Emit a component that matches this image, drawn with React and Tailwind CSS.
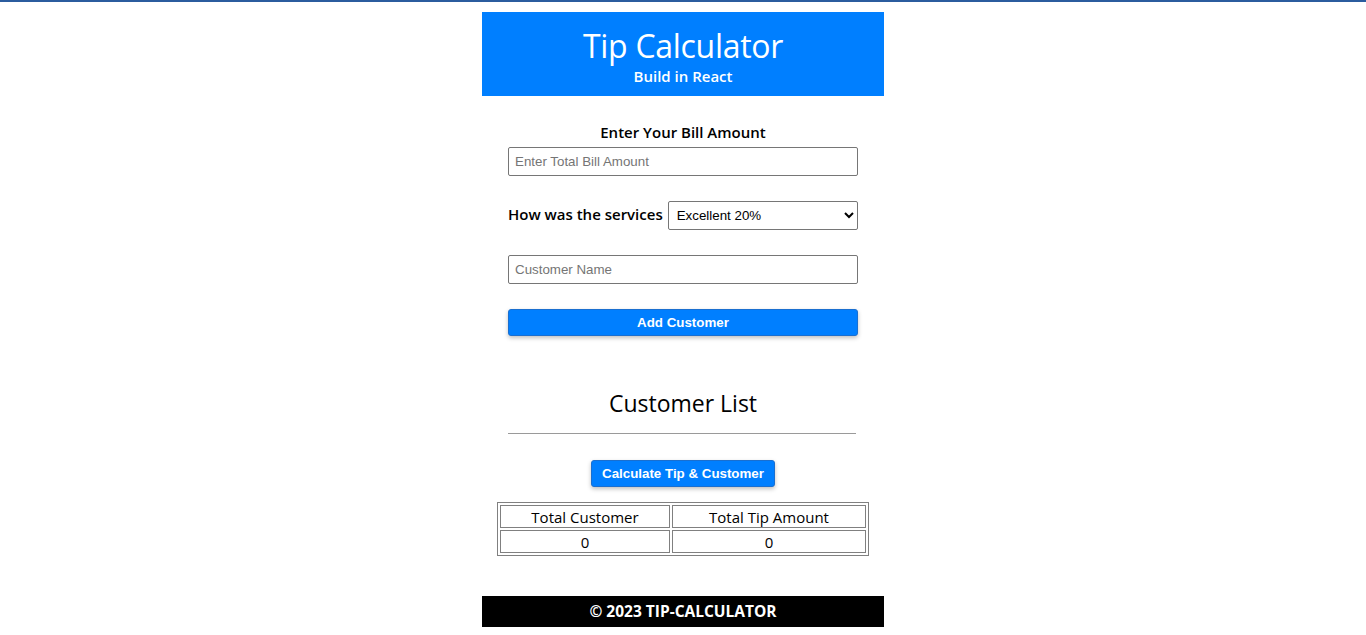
export default function App() {
  const font = { fontFamily: '"Open Sans", "Noto Sans", sans-serif' };
  return (
    <div className="min-h-[635px] bg-white border-t-2 border-[#2b5c9e]" style={font}>
      <div className="mx-auto w-[402px] pt-[10px] flex flex-col">
        <header className="h-[84px] bg-[#007fff] text-white flex flex-col items-center pt-[17px]">
          <h1 className="text-[32px] leading-[34px] font-medium tracking-[-0.3px]">Tip Calculator</h1>
          <p className="text-[15px] leading-[20px] font-semibold mt-[3px]">Build in React</p>
        </header>

        <div className="px-[26px] flex flex-col">
          <div className="pt-[25px] h-[47px] text-center text-[15px] leading-[22px] font-semibold text-black">
            Enter Your Bill Amount
          </div>
          <input
            className="mt-[4px] h-[29px] w-[350px] border border-[#767676] rounded-[2px] px-[6px] text-[13.33px] placeholder:text-[#757575] outline-none"
            style={{ fontFamily: '"Liberation Sans", Arial, sans-serif' }}
            placeholder="Enter Total Bill Amount"
          />
          <div className="mt-[25px] flex items-center gap-[5px]">
            <span className="text-[15px] leading-[22px] font-semibold text-black whitespace-nowrap mt-[-3px]">How was the services</span>
            <select
              className="h-[29px] w-[192px] border border-[#767676] rounded-[2px] pl-[4px] pr-[4px] text-[13.33px] bg-white text-black"
              style={{ fontFamily: '"Liberation Sans", Arial, sans-serif' }}
              defaultValue="20"
            >
              <option value="20">Excellent 20%</option>
              <option value="10">Good 10%</option>
              <option value="5">Bad 5%</option>
            </select>
          </div>
          <input
            className="mt-[25px] h-[29px] w-[350px] border border-[#767676] rounded-[2px] px-[6px] text-[13.33px] placeholder:text-[#757575] outline-none"
            style={{ fontFamily: '"Liberation Sans", Arial, sans-serif' }}
            placeholder="Customer Name"
          />
          <button
            className="mt-[25px] h-[27px] w-[350px] bg-[#007fff] text-white rounded-[3px] border border-[#1a6fd0] shadow-[0_2px_4px_rgba(0,0,0,0.25)] text-[13.33px] font-bold"
            style={{ fontFamily: '"Liberation Sans", Arial, sans-serif' }}
          >
            Add Customer
          </button>

          <h2 className="mt-[51px] h-[32px] text-center text-[23px] leading-[32px] font-medium text-black">Customer List</h2>
          <div className="mt-[14px] h-px w-[348px] bg-[#9a9a9a]" />
          <div className="mt-[26px] flex justify-center">
            <button
              className="h-[27px] w-[184px] bg-[#007fff] text-white rounded-[3px] border border-[#1a6fd0] shadow-[0_2px_4px_rgba(0,0,0,0.25)] text-[13.33px] font-bold"
              style={{ fontFamily: '"Liberation Sans", Arial, sans-serif' }}
            >
              Calculate Tip &amp; Customer
            </button>
          </div>
        </div>

        <div className="mt-[15px] flex justify-center">
          <table className="w-[372px] border border-[#808080] border-separate border-spacing-[2px] text-black text-[15px]">
            <thead>
              <tr>
                <th className="w-[170px] h-[23px] border border-[#808080] font-medium leading-[20px] p-0">Total Customer</th>
                <th className="h-[23px] border border-[#808080] font-medium leading-[20px] p-0">Total Tip Amount</th>
              </tr>
            </thead>
            <tbody>
              <tr>
                <td className="h-[23px] border border-[#808080] text-center font-medium leading-[20px] p-0">0</td>
                <td className="h-[23px] border border-[#808080] text-center font-medium leading-[20px] p-0">0</td>
              </tr>
            </tbody>
          </table>
        </div>

        <footer className="mt-[40px] h-[31px] bg-black text-white flex items-center justify-center text-[15.5px] font-bold">
          © 2023 TIP-CALCULATOR
        </footer>
      </div>
    </div>
  );
}
